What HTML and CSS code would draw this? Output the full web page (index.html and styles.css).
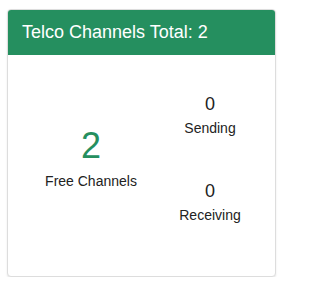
FILE: index.html
```html
<!DOCTYPE html>
<html>
<head>
<meta charset="utf-8">
<link rel="stylesheet" href="styles.css">
</head>
<body>
<div class="card">
  <div class="card-header">Telco Channels Total: 2</div>
  <div class="card-body">
    <div class="col-main">
      <div class="big-num">2</div>
      <div class="label">Free Channels</div>
    </div>
    <div class="col-side">
      <div class="stat">
        <div class="num">0</div>
        <div class="label">Sending</div>
      </div>
      <div class="stat">
        <div class="num">0</div>
        <div class="label">Receiving</div>
      </div>
    </div>
  </div>
</div>
</body>
</html>
```

FILE: styles.css
```css
html, body {
  margin: 0;
  padding: 0;
  background: #ffffff;
}
body {
  padding: 9px 7px 0 7px;
  font-family: "Liberation Sans", Arial, sans-serif;
  color: #222;
}
.card {
  width: 269px;
  height: 268px;
  box-sizing: border-box;
  border: 1px solid #dddddd;
  border-radius: 4px;
  box-shadow: 0 1px 2px rgba(0,0,0,0.1);
  background: #fff;
  display: flex;
  flex-direction: column;
  overflow: hidden;
}
.card-header {
  background: #258f5f;
  color: #ffffff;
  font-size: 18px;
  line-height: 20px;
  padding: 12px 14px 12px 14px;
  height: 45px;
  box-sizing: border-box;
}
.card-body {
  flex: 1;
  display: grid;
  grid-template-columns: 166px 72px;
  align-items: center;
}
.col-main {
  text-align: center;
  padding-bottom: 16px;
}
.big-num {
  color: #258f5f;
  font-size: 36px;
  line-height: 40px;
  margin-bottom: 6px;
}
.label {
  font-size: 14px;
  line-height: 18px;
  color: #222;
}
.col-side {
  text-align: center;
  display: flex;
  flex-direction: column;
  gap: 42px;
  padding-bottom: 15px;
}
.num {
  font-size: 18px;
  line-height: 24px;
  margin-bottom: 3px;
}
```
